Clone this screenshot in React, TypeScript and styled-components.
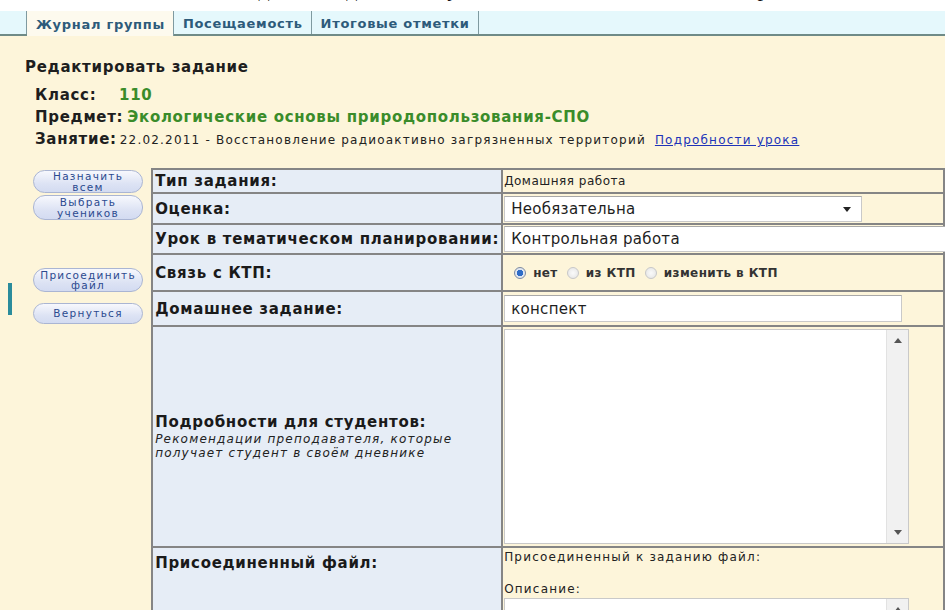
import styled, { createGlobalStyle } from "styled-components";

const GlobalStyle = createGlobalStyle`
  html, body {
    margin: 0;
    padding: 0;
    width: 945px;
    height: 610px;
    overflow: hidden;
    background: #fdf5da;
    font-family: "DejaVu Sans", Verdana, sans-serif;
  }
`;

// обрезанная строка документа над скриншотом журнала
const DocStrip = styled.div`
  height: 11px;
  background: #fff;
  overflow: hidden;
`;
const DocLine = styled.div`
  margin-top: -22px;
  padding-left: 30px;
  font-family: "Liberation Serif", "Times New Roman", serif;
  font-size: 22px;
  line-height: 22px;
  word-spacing: 6px;
  white-space: nowrap;
  color: #111;
`;

const TabBar = styled.div`
  display: flex;
  height: 23px;
  background: #e5f8fc;
  border-bottom: 2px solid #6f8b87;
`;
const TabSpacer = styled.div`
  width: 26px;
  border-right: 1px solid #7f9aa0;
`;
const Tab = styled.div<{ $active?: boolean }>`
  display: flex;
  align-items: center;
  padding: 2px 8px 0 9px;
  font-size: 13px;
  letter-spacing: 0.7px;
  font-weight: bold;
  color: #2d5b7a;
  border-right: 1px solid #7f9aa0;
  background: ${(p) => (p.$active ? "#fdfaee" : "transparent")};
  margin-bottom: ${(p) => (p.$active ? "-2px" : "0")};
`;

const Header = styled.div`
  padding: 22px 0 0 25px;
`;
const Title = styled.div`
  font-size: 15px;
  line-height: 18px;
  letter-spacing: 0.7px;
  font-weight: bold;
  color: #1e1e1e;
  margin-bottom: 8px;
`;
const InfoList = styled.div`
  display: flex;
  flex-direction: column;
  padding-left: 10px;
`;
const InfoRow = styled.div<{ $gap?: number }>`
  display: flex;
  align-items: baseline;
  gap: ${(p) => p.$gap ?? 4}px;
  height: 22px;
  line-height: 22px;
  font-size: 15px;
  letter-spacing: 0.7px;
  font-weight: bold;
  color: #1e1e1e;
  white-space: nowrap;
`;
const InfoLabel = styled.span<{ $width?: number }>`
  min-width: ${(p) => (p.$width ? `${p.$width}px` : "auto")};
`;
const GreenValue = styled.span`
  color: #3a8c2a;
`;
const PlainValue = styled.span`
  font-size: 12px;
  letter-spacing: 1.2px;
  font-weight: normal;
  color: #222;
`;
const LessonLink = styled.a`
  margin-left: 6px;
  font-size: 12px;
  letter-spacing: 1.2px;
  font-weight: normal;
  color: #2033b8;
  text-decoration: underline;
`;

const Body = styled.div`
  display: flex;
  align-items: flex-start;
  gap: 8px;
  padding: 18px 0 0 33px;
`;
const ButtonColumn = styled.div`
  display: flex;
  flex-direction: column;
  width: 111px;
  padding-top: 2px;
`;
const PillButton = styled.button<{ $gap?: number; $h: number }>`
  display: flex;
  flex-direction: column;
  align-items: center;
  justify-content: center;
  height: ${(p) => p.$h}px;
  margin-top: ${(p) => p.$gap ?? 0}px;
  padding: 0;
  border: 1px solid #aab5d3;
  border-radius: 12px;
  background: linear-gradient(#f7f8fd, #dde3f4 60%, #d3dbf1);
  font-family: "DejaVu Sans", Verdana, sans-serif;
  font-size: 10.5px;
  letter-spacing: 1.3px;
  line-height: 12px;
  color: #2b4a8f;
  white-space: nowrap;
  cursor: pointer;
`;
const ButtonLine = styled.span`
  display: block;
  height: 10.5px;
  line-height: 10.5px;
`;

const FormTable = styled.table`
  border-collapse: collapse;
  width: 800px;
  table-layout: fixed;
`;
const Row = styled.tr<{ $h: number }>`
  height: ${(p) => p.$h}px;
`;
const LabelCell = styled.td<{ $top?: boolean }>`
  width: 344px;
  padding: ${(p) => (p.$top ? "6px 2px 0" : "0 2px")};
  vertical-align: ${(p) => (p.$top ? "top" : "middle")};
  background: #e6edf6;
  border: 2px solid #858585;
  font-size: 15px;
  letter-spacing: 0.7px;
  font-weight: bold;
  color: #1a1a1a;
  white-space: nowrap;
`;
const Hint = styled.div`
  margin-top: 1px;
  font-size: 12px;
  letter-spacing: 1.2px;
  font-weight: normal;
  font-style: italic;
  line-height: 14px;
  color: #222;
`;
const ValueCell = styled.td<{ $top?: boolean }>`
  padding: ${(p) => (p.$top ? "2px 0 0 1px" : "0 0 0 1px")};
  vertical-align: ${(p) => (p.$top ? "top" : "middle")};
  background: #fdf5da;
  border: 2px solid #858585;
  font-size: 12px;
  color: #222;
  white-space: nowrap;
`;
const SmallText = styled.div<{ $spacing: number }>`
  letter-spacing: ${(p) => p.$spacing}px;
`;
const Field = styled.div<{ $w: number; $h: number }>`
  position: relative;
  display: flex;
  align-items: center;
  box-sizing: border-box;
  width: ${(p) => p.$w}px;
  height: ${(p) => p.$h}px;
  padding-left: 6px;
  background: #fff;
  border: 1px solid #c9c9c9;
  border-top-color: #a9a9a9;
  font-size: 15px;
  letter-spacing: 0.3px;
  color: #1e1e1e;
`;
const Caret = styled.span`
  position: absolute;
  right: 10px;
  top: 10px;
  border-left: 4px solid transparent;
  border-right: 4px solid transparent;
  border-top: 5px solid #222;
`;
const Scrollbar = styled.div`
  position: absolute;
  right: 0;
  top: 0;
  bottom: 0;
  width: 22px;
  display: flex;
  flex-direction: column;
  justify-content: space-between;
  align-items: center;
  padding: 8px 0;
  box-sizing: border-box;
  background: #f1f1f1;
  border-left: 1px solid #e2e2e2;
`;
const Arrow = styled.span<{ $down?: boolean }>`
  border-left: 4px solid transparent;
  border-right: 4px solid transparent;
  ${(p) =>
    p.$down ? "border-top: 5px solid #555;" : "border-bottom: 5px solid #555;"}
`;
const TextArea = styled.div<{ $w: number; $h: number }>`
  position: relative;
  box-sizing: border-box;
  width: ${(p) => p.$w}px;
  height: ${(p) => p.$h}px;
  background: #fff;
  border: 1px solid #c9c9c9;
`;
const RadioGroup = styled.div`
  display: flex;
  align-items: center;
  padding-left: 10px;
  font-size: 12px;
  letter-spacing: 0.4px;
  font-weight: bold;
  color: #333;
`;
const RadioOption = styled.label`
  display: flex;
  align-items: center;
  gap: 7px;
  margin-right: 9px;
`;
const Radio = styled.span<{ $checked?: boolean }>`
  box-sizing: border-box;
  width: 12px;
  height: 12px;
  border-radius: 50%;
  border: 1px solid ${(p) => (p.$checked ? "#7d8aa0" : "#c8c8c8")};
  background: ${(p) =>
    p.$checked
      ? "radial-gradient(circle, #2e6cc7 0 3px, #dfe6f0 3.5px)"
      : "radial-gradient(circle, #fafafa, #e3e3e3)"};
`;
const FileNote = styled(SmallText)`
  margin-bottom: 18px;
`;
const DescLabel = styled(SmallText)`
  margin-bottom: 2px;
`;

const SideHandle = styled.div`
  position: absolute;
  left: 8px;
  top: 283px;
  width: 4px;
  height: 32px;
  background: #2a8c9c;
`;

const buttons = [
  { lines: ["Назначить", "всем"], h: 23, gap: 0 },
  { lines: ["Выбрать", "учеников"], h: 25, gap: 2 },
  { lines: ["Присоединить", "файл"], h: 24, gap: 48 },
  { lines: ["Вернуться"], h: 21, gap: 11 },
];

export default function App() {
  return (
    <>
      <GlobalStyle />
      <DocStrip>
        <DocLine>
          Отметим, что новое задание видно всем ученикам класса, если его выбрать в списке
        </DocLine>
      </DocStrip>
      <TabBar>
        <TabSpacer />
        <Tab $active>Журнал группы</Tab>
        <Tab>Посещаемость</Tab>
        <Tab>Итоговые отметки</Tab>
      </TabBar>

      <Header>
        <Title>Редактировать задание</Title>
        <InfoList>
          <InfoRow>
            <InfoLabel $width={80}>Класс:</InfoLabel>
            <GreenValue>110</GreenValue>
          </InfoRow>
          <InfoRow>
            <InfoLabel>Предмет:</InfoLabel>
            <GreenValue>Экологические основы природопользования-СПО</GreenValue>
          </InfoRow>
          <InfoRow $gap={3}>
            <InfoLabel>Занятие:</InfoLabel>
            <PlainValue>
              22.02.2011 - Восстановление радиоактивно загрязненных территорий
            </PlainValue>
            <LessonLink>Подробности урока</LessonLink>
          </InfoRow>
        </InfoList>
      </Header>

      <Body>
        <ButtonColumn>
          {buttons.map((b) => (
            <PillButton key={b.lines[0]} $h={b.h} $gap={b.gap}>
              {b.lines.map((line) => (
                <ButtonLine key={line}>{line}</ButtonLine>
              ))}
            </PillButton>
          ))}
        </ButtonColumn>

        <FormTable>
          <tbody>
            <Row $h={24}>
              <LabelCell>Тип задания:</LabelCell>
              <ValueCell>
                <SmallText $spacing={0.5}>Домашняя работа</SmallText>
              </ValueCell>
            </Row>
            <Row $h={31}>
              <LabelCell>Оценка:</LabelCell>
              <ValueCell>
                <Field $w={358} $h={26}>
                  Необязательна
                  <Caret />
                </Field>
              </ValueCell>
            </Row>
            <Row $h={30}>
              <LabelCell>Урок в тематическом планировании:</LabelCell>
              <ValueCell>
                <Field $w={460} $h={26}>
                  Контрольная работа
                </Field>
              </ValueCell>
            </Row>
            <Row $h={37}>
              <LabelCell>Связь с КТП:</LabelCell>
              <ValueCell>
                <RadioGroup>
                  <RadioOption>
                    <Radio $checked />
                    нет
                  </RadioOption>
                  <RadioOption>
                    <Radio />
                    из КТП
                  </RadioOption>
                  <RadioOption>
                    <Radio />
                    изменить в КТП
                  </RadioOption>
                </RadioGroup>
              </ValueCell>
            </Row>
            <Row $h={35}>
              <LabelCell>Домашнее задание:</LabelCell>
              <ValueCell>
                <Field $w={398} $h={27}>
                  конспект
                </Field>
              </ValueCell>
            </Row>
            <Row $h={221}>
              <LabelCell>
                Подробности для студентов:
                <Hint>
                  Рекомендации преподавателя, которые
                  <br />
                  получает студент в своём дневнике
                </Hint>
              </LabelCell>
              <ValueCell>
                <TextArea $w={405} $h={215}>
                  <Scrollbar>
                    <Arrow />
                    <Arrow $down />
                  </Scrollbar>
                </TextArea>
              </ValueCell>
            </Row>
            <Row $h={90}>
              <LabelCell $top>Присоединенный файл:</LabelCell>
              <ValueCell $top>
                <FileNote $spacing={1.2}>Присоединенный к заданию файл:</FileNote>
                <DescLabel $spacing={1.2}>Описание:</DescLabel>
                <TextArea $w={405} $h={60}>
                  <Scrollbar>
                    <Arrow />
                  </Scrollbar>
                </TextArea>
              </ValueCell>
            </Row>
          </tbody>
        </FormTable>
      </Body>
      <SideHandle />
    </>
  );
}
